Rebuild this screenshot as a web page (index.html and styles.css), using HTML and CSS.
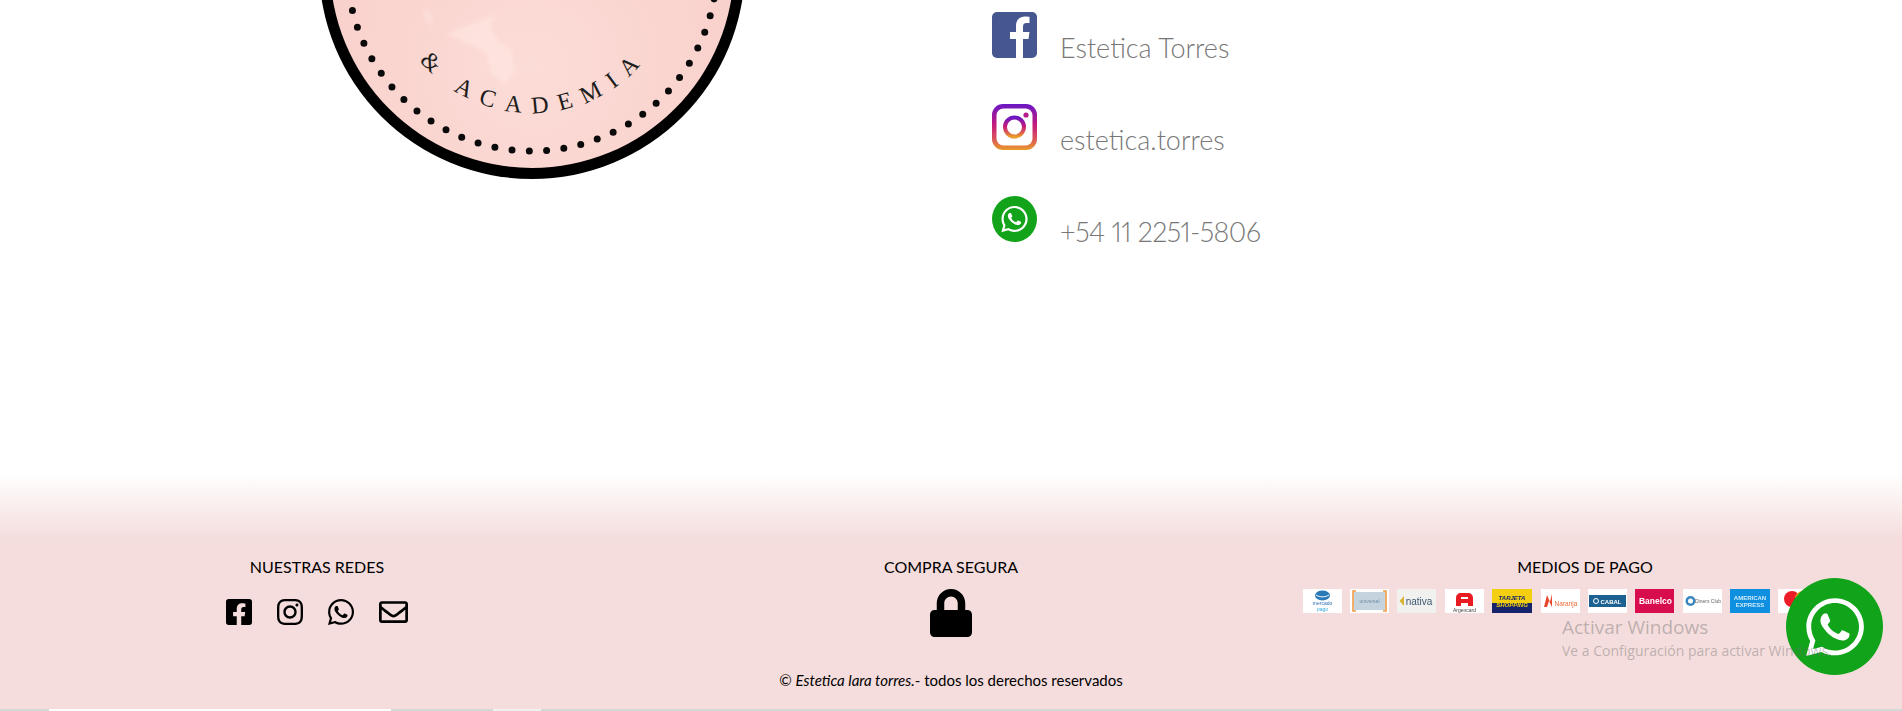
FILE: index.html
```html
<!DOCTYPE html>
<html lang="es">
<head>
<meta charset="utf-8">
<title>Estetica Torres</title>
<link rel="stylesheet" href="styles.css">
</head>
<body>
<svg class="sprites" width="0" height="0" aria-hidden="true">
  <defs>
    <symbol id="i-fb" viewBox="0 0 448 512"><path d="M400 32H48A48 48 0 0 0 0 80v352a48 48 0 0 0 48 48h137.25V327.69h-63V256h63v-54.64c0-62.15 37-96.48 93.67-96.48 27.14 0 55.52 4.84 55.52 4.84v61h-31.27c-30.81 0-40.42 19.12-40.42 38.73V256h68.78l-11 71.69h-57.78V480H400a48 48 0 0 0 48-48V80a48 48 0 0 0-48-48z"/></symbol>
    <symbol id="i-ig" viewBox="0 0 448 512"><path d="M224.1 141c-63.6 0-114.9 51.3-114.9 114.9s51.3 114.9 114.9 114.9S339 319.5 339 255.9 287.7 141 224.1 141zm0 189.6c-41.1 0-74.7-33.5-74.7-74.7s33.5-74.7 74.7-74.7 74.7 33.5 74.7 74.7-33.6 74.7-74.7 74.7zm146.4-194.3c0 14.9-12 26.8-26.8 26.8-14.9 0-26.8-12-26.8-26.8s12-26.8 26.8-26.8 26.8 12 26.8 26.8zm76.1 27.2c-1.7-35.9-9.9-67.7-36.2-93.9-26.2-26.2-58-34.4-93.9-36.2-37-2.1-147.9-2.1-184.9 0-35.8 1.7-67.6 9.9-93.9 36.1s-34.4 58-36.2 93.9c-2.1 37-2.1 147.9 0 184.9 1.7 35.9 9.9 67.7 36.2 93.9s58 34.4 93.9 36.2c37 2.1 147.9 2.1 184.9 0 35.9-1.7 67.7-9.9 93.9-36.2 26.2-26.2 34.4-58 36.2-93.9 2.1-37 2.1-147.8 0-184.8zM398.8 388c-7.8 19.6-22.9 34.7-42.6 42.6-29.5 11.7-99.5 9-132.1 9s-102.7 2.6-132.1-9c-19.6-7.8-34.7-22.9-42.6-42.6-11.7-29.5-9-99.5-9-132.1s-2.6-102.7 9-132.1c7.8-19.6 22.9-34.7 42.6-42.6 29.5-11.7 99.5-9 132.1-9s102.7-2.6 132.1 9c19.6 7.8 34.7 22.9 42.6 42.6 11.7 29.5 9 99.5 9 132.1s2.7 102.7-9 132.1z"/></symbol>
    <symbol id="i-wa" viewBox="0 0 448 512"><path d="M380.9 97.1C339 55.1 283.2 32 223.9 32c-122.4 0-222 99.6-222 222 0 39.1 10.2 77.3 29.6 111L0 480l117.7-30.9c32.4 17.7 68.9 27 106.1 27h.1c122.3 0 224.1-99.6 224.1-222 0-59.3-25.2-115-67.1-157zm-157 341.6c-33.2 0-65.7-8.9-94-25.7l-6.7-4-69.8 18.3L72 359.2l-4.4-7c-18.5-29.4-28.2-63.3-28.2-98.2 0-101.7 82.8-184.5 184.6-184.5 49.3 0 95.6 19.2 130.4 54.1 34.8 34.9 56.2 81.2 56.1 130.5 0 101.8-84.9 184.6-186.6 184.6zm101.2-138.2c-5.5-2.8-32.8-16.2-37.9-18-5.1-1.9-8.8-2.8-12.5 2.8-3.7 5.6-14.3 18-17.6 21.8-3.2 3.7-6.5 4.2-12 1.4-32.6-16.3-54-29.1-75.5-66-5.7-9.8 5.7-9.1 16.3-30.3 1.8-3.7.9-6.9-.5-9.7-1.4-2.8-12.5-30.1-17.1-41.2-4.5-10.8-9.1-9.3-12.5-9.5-3.2-.2-6.9-.2-10.6-.2-3.7 0-9.7 1.4-14.8 6.9-5.1 5.6-19.4 19-19.4 46.3 0 27.3 19.9 53.7 22.6 57.4 2.8 3.7 39.1 59.7 94.8 83.8 35.2 15.2 49 16.5 66.6 13.9 10.7-1.6 32.8-13.4 37.4-26.4 4.6-13 4.6-24.1 3.2-26.4-1.3-2.5-5-3.9-10.5-6.6z"/></symbol>
    <symbol id="i-mail" viewBox="0 0 512 512"><path d="M464 64H48C21.49 64 0 85.49 0 112v288c0 26.51 21.49 48 48 48h416c26.51 0 48-21.49 48-48V112c0-26.51-21.49-48-48-48zm0 48v40.805c-22.422 18.259-58.168 46.651-134.587 106.49-16.841 13.247-50.201 45.072-73.413 44.701-23.208.375-56.579-31.459-73.413-44.701C106.18 199.465 70.425 171.067 48 152.805V112h416zM48 400V214.398c22.914 18.251 55.409 43.862 104.938 82.646 21.857 17.205 60.134 55.186 103.062 54.955 42.717.231 80.509-37.199 103.053-54.947 49.528-38.783 82.032-64.401 104.947-82.653V400H48z"/></symbol>
    <symbol id="i-lock" viewBox="0 0 448 512"><path d="M400 224h-24v-72C376 68.2 307.8 0 224 0S72 68.2 72 152v72H48c-26.5 0-48 21.5-48 48v192c0 26.5 21.5 48 48 48h352c26.5 0 48-21.5 48-48V272c0-26.5-21.5-48-48-48zm-104 0H152v-72c0-39.7 32.3-72 72-72s72 32.3 72 72v72z"/></symbol>
    <linearGradient id="ig-grad" x1="0" y1="0" x2="0" y2="1">
      <stop offset="0" stop-color="#6a17c4"/>
      <stop offset=".45" stop-color="#c41a7c"/>
      <stop offset=".75" stop-color="#d9535a"/>
      <stop offset="1" stop-color="#e99a2a"/>
    </linearGradient>
    <radialGradient id="wash" cx=".5" cy=".75" r=".7">
      <stop offset="0" stop-color="#fcdcd7"/>
      <stop offset=".55" stop-color="#fad4cf"/>
      <stop offset="1" stop-color="#f8cdc8"/>
    </radialGradient>
    <filter id="soft" x="-30%" y="-30%" width="160%" height="160%"><feGaussianBlur stdDeviation="2"/></filter>
  </defs>
</svg>

<main class="hero">
  <div class="logo-col">
    <svg class="logo" viewBox="0 0 426 180" role="img" aria-label="Logo Estetica Torres y Academia">
      <defs>
        <path id="logo-arc" d="M 66 -34 A 147 147 0 0 0 360 -34"/>
      </defs>
      <circle cx="213" cy="-34" r="213" fill="#000"/>
      <circle cx="213" cy="-34" r="202" fill="url(#wash)"/>
      <g fill="#fee6e1" filter="url(#soft)" opacity=".7">
        <path d="M128 34 L176 14 L172 28 L180 42 L192 50 L196 70 L186 84 L172 74 L166 52 L150 44z"/>
        <path d="M104 9 L112 14 L114 26 L108 20z"/>
      </g>
      <circle class="logo-dots" cx="213" cy="-34" r="185" pathLength="67"/>
      <text class="logo-text"><textPath href="#logo-arc" startOffset="50.5%" text-anchor="middle">&amp; ACADEMIA</textPath></text>
    </svg>
  </div>
  <ul class="contacts">
    <li class="contact">
      <svg class="contact-icon" viewBox="0 0 45 46"><rect width="45" height="46" rx="5" fill="#46578f"/><path fill="#fff" d="M24 46V27h-6v-7h6v-6c0-6 3.600-9.500 9-9.500 2.500 0 4.500.3 4.500.3v6.200h-3c-2.700 0-3.500 1.700-3.500 3.500V20h6.500l-1 7H31v19z"/></svg>
      <span>Estetica Torres</span>
    </li>
    <li class="contact">
      <svg class="contact-icon" viewBox="0 0 45 46"><rect width="45" height="46" rx="11" fill="url(#ig-grad)"/><rect x="4.500" y="4.500" width="36" height="37" rx="7" fill="#fff"/><circle cx="22.500" cy="23" r="9.500" fill="none" stroke="url(#ig-grad)" stroke-width="4"/><circle cx="34" cy="11" r="2.600" fill="#b81b8b"/></svg>
      <span>estetica.torres</span>
    </li>
    <li class="contact">
      <svg class="contact-icon" viewBox="0 0 45 46"><ellipse cx="22.500" cy="23" rx="22.500" ry="23" fill="#12a31a"/><use href="#i-wa" x="9" y="8" width="27" height="30" fill="#fff"/></svg>
      <span class="contact-phone">+54 11 2251-5806</span>
    </li>
  </ul>
</main>

<footer class="site-footer">
  <div class="footer-cols">
    <section class="footer-col">
      <h3 class="footer-title">NUESTRAS REDES</h3>
      <div class="social">
        <svg class="social-icon"><use href="#i-fb"/></svg>
        <svg class="social-icon"><use href="#i-ig"/></svg>
        <svg class="social-icon"><use href="#i-wa"/></svg>
        <svg class="social-icon social-mail"><use href="#i-mail"/></svg>
      </div>
    </section>
    <section class="footer-col">
      <h3 class="footer-title">COMPRA SEGURA</h3>
      <svg class="lock"><use href="#i-lock"/></svg>
    </section>
    <section class="footer-col">
      <h3 class="footer-title">MEDIOS DE PAGO</h3>
      <div class="pay-row">
        <svg class="pay" viewBox="0 0 39 24"><rect width="39" height="24" fill="#fff"/><ellipse cx="19.500" cy="6.500" rx="7.500" ry="5" fill="#2c79b8"/><path d="M13 6c4 2.500 9 2.500 13 0" stroke="#fff" fill="none"/><text x="19.500" y="16" class="pt" fill="#2c6fb0">mercado</text><text x="19.500" y="21.500" class="pt" fill="#35a9e0">pago</text></svg>
        <svg class="pay" viewBox="0 0 39 24"><rect width="39" height="24" fill="#fff"/><rect x="4" y="3" width="31" height="18" fill="#c5d3de"/><path d="M6 2H3v20h3M33 2h3v20h-3" stroke="#ef9b45" stroke-width="1.600" fill="none"/><text x="19.500" y="14" class="pt" fill="#6f8fa8">universal</text></svg>
        <svg class="pay" viewBox="0 0 39 24"><rect width="39" height="24" rx="1" fill="#f1f1ef"/><path d="M7 7 2.500 12 7 17z" fill="#d9b334"/><text x="22" y="15.500" class="pn" fill="#3d5770">nativa</text></svg>
        <svg class="pay" viewBox="0 0 39 24"><rect width="39" height="24" fill="#fff"/><path d="M11 17V9c0-3 2-5 5-5h7c3 0 5 2 5 5v8h-5v-3h-7v3zm5-7h7V8h-7z" fill="#e91c24"/><text x="19.500" y="22.500" class="pt" fill="#444">Argencard</text></svg>
        <svg class="pay pay-wide" viewBox="0 0 40 24"><rect width="40" height="24" fill="#f3cf10"/><rect y="14" width="40" height="10" fill="#16256b"/><text x="20" y="11" class="pb pi" fill="#16256b">TARJETA</text><text x="20" y="18" class="pb pi" fill="#f3cf10">SHOPPING</text></svg>
        <svg class="pay" viewBox="0 0 39 24"><rect width="39" height="24" fill="#fff"/><path d="M3 18 6 6l3 7 2-8v13l-3-6-2 6z" fill="#e8452a"/><text x="25" y="17" class="pm" fill="#ee6a3a">Naranja</text></svg>
        <svg class="pay" viewBox="0 0 39 24"><rect width="39" height="24" fill="#fff"/><rect x="1" y="6" width="37" height="12" fill="#1c6192"/><text x="23" y="14.500" class="pb" fill="#fff">CABAL</text><circle cx="8" cy="12" r="2.500" fill="none" stroke="#fff"/></svg>
        <svg class="pay" viewBox="0 0 39 24"><rect width="39" height="24" fill="#d80d4d"/><text x="20.500" y="15" class="pl" fill="#fff">Banelco</text></svg>
        <svg class="pay" viewBox="0 0 39 24"><rect width="39" height="24" fill="#fff"/><circle cx="7.500" cy="12" r="5" fill="#3a86c0"/><circle cx="7.500" cy="12" r="2.500" fill="#fff"/><text x="25" y="14" class="pt" fill="#666">Diners Club</text></svg>
        <svg class="pay pay-wide" viewBox="0 0 40 24"><rect width="40" height="24" fill="#0e8fe0"/><text x="20" y="10.500" class="pb" fill="#d3ebfa">AMERICAN</text><text x="20" y="18" class="pb" fill="#d3ebfa">EXPRESS</text></svg>
        <svg class="pay" viewBox="0 0 39 24"><rect width="39" height="24" fill="#fff"/><circle cx="14" cy="10" r="8" fill="#eb1c26"/><circle cx="25" cy="10" r="8" fill="#f79e1b"/></svg>
      </div>
    </section>
  </div>
  <p class="copyright">© <em>Estetica lara torres.</em>- todos los derechos reservados</p>
</footer>

<div class="status-strip"><span class="strip-a"></span><span class="strip-b"></span></div>

<a class="wa-fab" href="#" aria-label="WhatsApp"><svg class="wa-fab-icon"><use href="#i-wa"/></svg></a>

<div class="win-mark">
  <div class="win-title">Activar Windows</div>
  <div class="win-sub">Ve a Configuración para activar Windows.</div>
</div>
</body>
</html>
```
FILE: styles.css
```css
* { box-sizing: border-box; }

html, body {
  margin: 0;
  height: 711px;
  overflow: hidden;
  background: #fff;
}

body {
  position: relative;
  display: flex;
  flex-direction: column;
  font-family: "Lato", "Noto Sans", sans-serif;
  color: #000;
}

.sprites { position: absolute; }

.hero {
  display: grid;
  grid-template-columns: 951px 1fr;
  height: 473px;
  flex: none;
}

.logo-col { padding-left: 319px; }

.logo {
  display: block;
  width: 426px;
  height: 180px;
}

.logo-dots {
  fill: none;
  stroke: #0a0a0a;
  stroke-width: 7;
  stroke-linecap: round;
  stroke-dasharray: 0 1;
  stroke-dashoffset: -0.906;
}

.logo-text {
  font-family: "Liberation Serif", serif;
  font-size: 24px;
  letter-spacing: 10.800px;
  fill: #1d1d1d;
}

.contacts {
  list-style: none;
  margin: 12px 0 0;
  padding: 0 0 0 41px;
  display: flex;
  flex-direction: column;
  gap: 46px;
}

.contact {
  display: flex;
  align-items: baseline;
  gap: 23px;
  height: 46px;
  font-size: 27px;
  font-weight: 300;
  color: #777;
}

.contact-phone {
  font-variant-numeric: proportional-nums;
  letter-spacing: -0.500px;
}

.contact-icon {
  width: 45px;
  height: 46px;
  flex: none;
}

.site-footer {
  flex: 1;
  background: linear-gradient(#fff 0, #f4dddc 67px);
  padding-top: 84px;
}

.footer-cols {
  display: grid;
  grid-template-columns: repeat(3, 1fr);
}

.footer-col {
  display: flex;
  flex-direction: column;
  align-items: center;
}

.footer-title {
  margin: 0;
  font-size: 16px;
  line-height: 20px;
  font-weight: 400;
}

.social {
  display: flex;
  gap: 25px;
  margin-top: 20px;
  margin-left: -1px;
}

.social-icon {
  display: block;
  width: 26px;
  height: 30px;
}

.social-mail { width: 29px; }

.lock {
  display: block;
  width: 42px;
  height: 48px;
  margin-top: 12px;
}

.pay-row {
  display: flex;
  gap: 8.400px;
  margin-top: 12px;
  margin-left: -50px;
}

.pay {
  display: block;
  width: 39px;
  height: 24px;
  flex: none;
  filter: blur(.4px);
}

.pay-wide { width: 40px; }

.pay text { text-anchor: middle; font-family: "Liberation Sans", sans-serif; }
.pay .pt { font-size: 5px; }
.pay .pb { font-size: 6px; font-weight: 700; }
.pay .pi { font-style: italic; }
.pay .pm { font-size: 6.500px; }
.pay .pn { font-size: 10px; }
.pay .pl { font-size: 8.500px; font-weight: 700; }

.copyright {
  margin: 33px 0 0;
  text-align: center;
  font-size: 15px;
  line-height: 20px;
}

.status-strip {
  height: 2px;
  background: #d6d6d6;
  display: flex;
  flex: none;
}

.strip-a {
  width: 342px;
  margin-left: 49px;
  background: #fff;
}

.strip-b {
  width: 48px;
  margin-left: 102px;
  background: #f1efef;
}

.wa-fab {
  position: absolute;
  left: 1786px;
  top: 578px;
  width: 97px;
  height: 97px;
  border-radius: 50%;
  background: #11a31a;
  display: flex;
  align-items: center;
  justify-content: center;
}

.wa-fab-icon {
  width: 58px;
  height: 66px;
  fill: #fff;
}

.win-mark {
  position: absolute;
  left: 1562px;
  top: 613px;
  font-family: "Open Sans", sans-serif;
  color: rgba(110, 110, 110, .42);
  white-space: nowrap;
}

.win-title { font-size: 19px; line-height: 28px; }
.win-sub { font-size: 14px; line-height: 20px; }
```
